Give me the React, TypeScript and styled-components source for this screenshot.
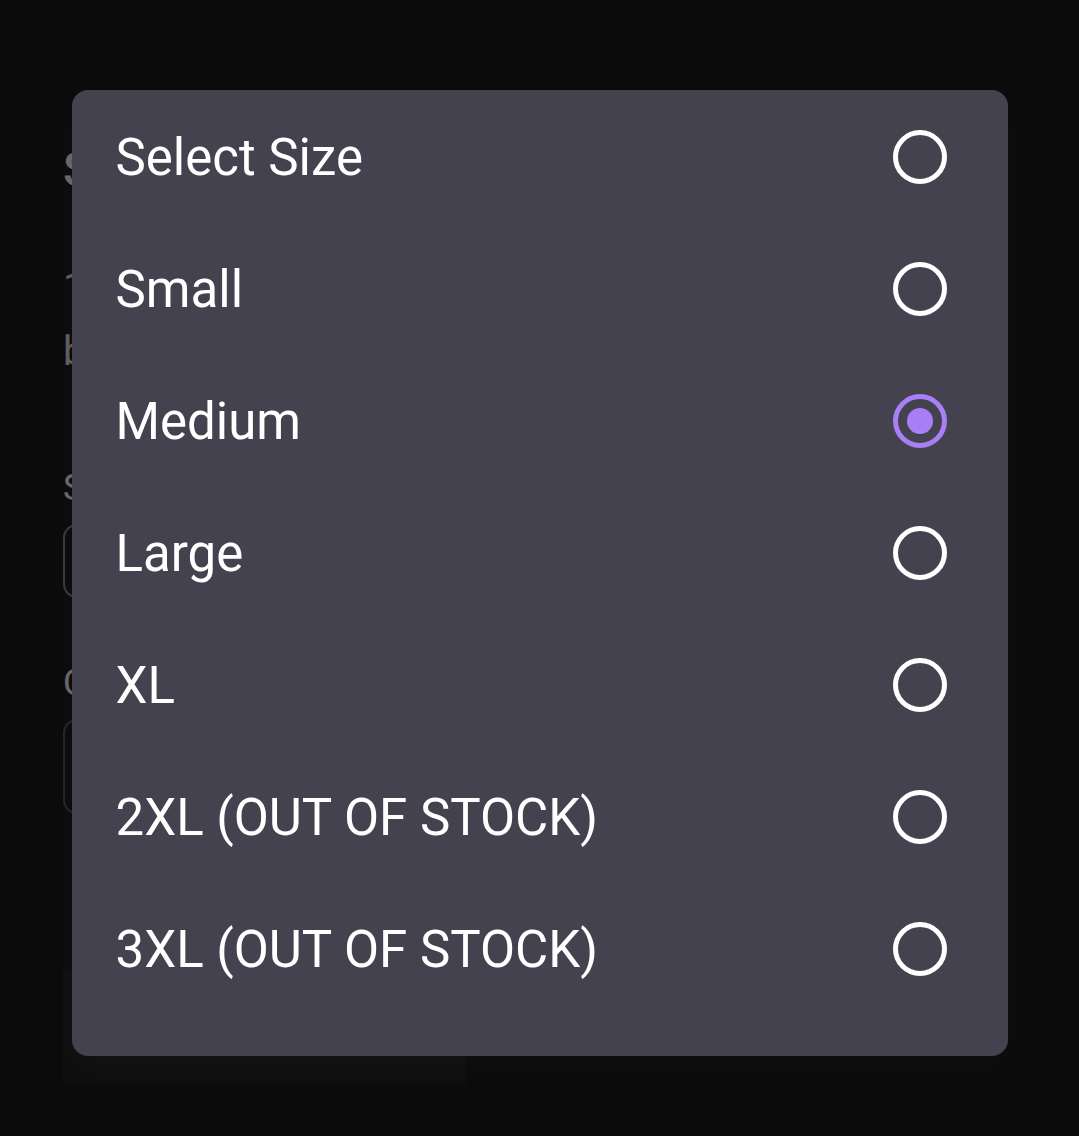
import React, { useState } from "react";
import styled, { createGlobalStyle } from "styled-components";

const GlobalStyle = createGlobalStyle`
  html, body {
    margin: 0;
    padding: 0;
    background: #1c1c1c;
    font-family: Roboto, "Noto Sans", Arial, sans-serif;
  }
`;

const Page = styled.div`
  position: relative;
  width: 1079px;
  height: 1136px;
  overflow: hidden;
  background: #1c1c1c;
  color: #fff;
`;

const Content = styled.div`
  display: flex;
  flex-direction: column;
  padding: 138px 0 0 63px;
  width: 940px;
`;

const Heading = styled.h1`
  margin: 0;
  font-size: 48px;
  line-height: 64px;
  font-weight: 500;
`;

const Desc = styled.p`
  margin: 54px 0 0;
  font-size: 40px;
  line-height: 64px;
  color: #e8e8e8;
`;

const Label = styled.div<{ $gap: number }>`
  margin-top: ${(p) => p.$gap}px;
  font-size: 36px;
  line-height: 44px;
`;

const Field = styled.div<{ $tall?: boolean; $strong?: boolean }>`
  margin-top: 14px;
  height: ${(p) => (p.$tall ? 91 : 70)}px;
  border: 2px solid ${(p) => (p.$strong ? "#8e8e8e" : "#5e5e5e")};
  border-radius: 14px;
`;

const CartButton = styled.div`
  margin-top: 155px;
  width: 403px;
  height: 115px;
  background: #262626;
`;

const Scrim = styled.div`
  position: absolute;
  inset: 0;
  background: rgba(0, 0, 0, 0.6);
  display: flex;
  justify-content: center;
  align-items: flex-start;
  padding-top: 90px;
`;

const Dialog = styled.div`
  width: 936px;
  box-sizing: border-box;
  background: #44424f;
  border-radius: 16px;
  padding: 1px 0 41px;
  box-shadow: 0 10px 40px rgba(255, 255, 255, 0.025);
  display: flex;
  flex-direction: column;
`;

const Option = styled.label`
  display: flex;
  align-items: center;
  justify-content: space-between;
  height: 132px;
  padding: 0 61px 0 44px;
  cursor: pointer;
`;

const OptionText = styled.span`
  font-size: 51px;
  color: #ffffff;
`;

const Radio = styled.span<{ $checked: boolean }>`
  width: 54px;
  height: 54px;
  box-sizing: border-box;
  border-radius: 50%;
  border: 5px solid ${(p) => (p.$checked ? "#a87ff7" : "#ffffff")};
  display: flex;
  align-items: center;
  justify-content: center;

  &::after {
    content: "";
    width: 26px;
    height: 26px;
    border-radius: 50%;
    background: #a87ff7;
    display: ${(p) => (p.$checked ? "block" : "none")};
  }
`;

const options = [
  "Select Size",
  "Small",
  "Medium",
  "Large",
  "XL",
  "2XL (OUT OF STOCK)",
  "3XL (OUT OF STOCK)",
];

export default function App() {
  const [selected, setSelected] = useState("Medium");

  return (
    <Page>
      <GlobalStyle />
      <Content>
        <Heading>Select Options</Heading>
        <Desc>
          1 item in your bag
          <br />
          by Merch Store
        </Desc>
        <Label $gap={82}>Size</Label>
        <Field $strong />
        <Label $gap={63}>Color</Label>
        <Field $tall />
        <CartButton />
      </Content>
      <Scrim>
        <Dialog>
          {options.map((o) => (
            <Option key={o} onClick={() => setSelected(o)}>
              <OptionText>{o}</OptionText>
              <Radio $checked={selected === o} />
            </Option>
          ))}
        </Dialog>
      </Scrim>
    </Page>
  );
}
